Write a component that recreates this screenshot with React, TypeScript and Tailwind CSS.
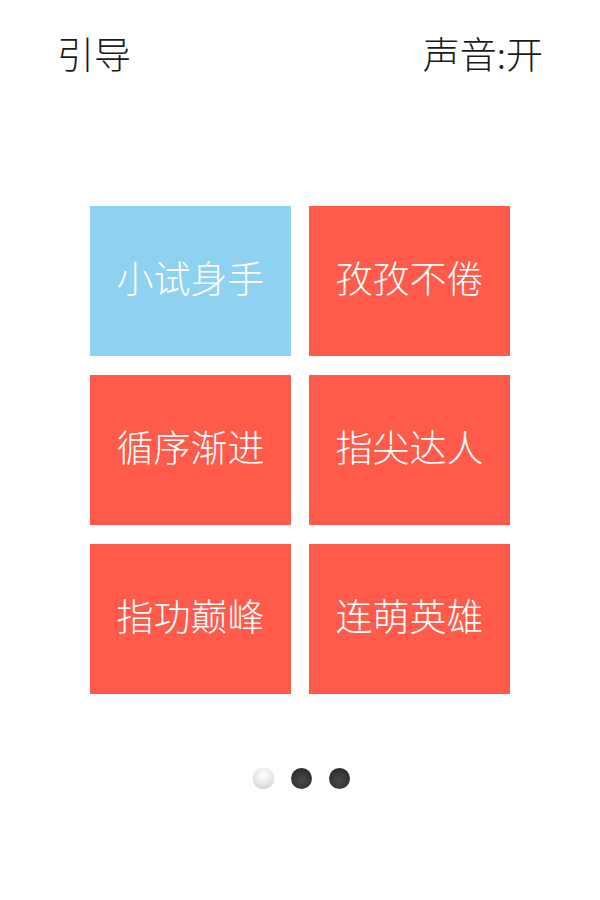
import React from "react";

const tiles = [
  { label: "小试身手", blue: true },
  { label: "孜孜不倦" },
  { label: "循序渐进" },
  { label: "指尖达人" },
  { label: "指功巅峰" },
  { label: "连萌英雄" },
];

export default function App() {
  return (
    <div
      className="w-[600px] h-[900px] bg-white overflow-hidden"
      style={{ fontFamily: '"Noto Sans CJK SC", "Noto Sans", sans-serif' }}
    >
      <div className="flex justify-between items-center h-[108px] pl-[57px] pr-[57px] text-[37px] text-[#1a1a1a] font-light">
        <span>引导</span>
        <span>声音:开</span>
      </div>
      <div className="pt-[98px] flex justify-center">
        <div className="grid grid-cols-[201px_201px] gap-x-[18px] gap-y-[19px]">
          {tiles.map((t) => (
            <div
              key={t.label}
              className={`h-[150px] pb-[6px] flex items-center justify-center text-white text-[37px] font-light ${
                t.blue ? "bg-[#8ed1f0]" : "bg-[#ff5a4a]"
              }`}
            >
              {t.label}
            </div>
          ))}
        </div>
      </div>
      <div className="flex justify-center gap-[17px] mt-[74px] pl-[2px]">
        <div className="w-[21px] h-[21px] rounded-full bg-[radial-gradient(circle_at_50%_35%,#ffffff_0%,#e6e6e6_55%,#c4c4c4_100%)] shadow-[0_0_1px_rgba(0,0,0,0.3)]" />
        <div className="w-[21px] h-[21px] rounded-full bg-[radial-gradient(circle_at_50%_60%,#4a4a4a_0%,#333333_60%,#111111_100%)]" />
        <div className="w-[21px] h-[21px] rounded-full bg-[radial-gradient(circle_at_50%_60%,#4a4a4a_0%,#333333_60%,#111111_100%)]" />
      </div>
    </div>
  );
}
